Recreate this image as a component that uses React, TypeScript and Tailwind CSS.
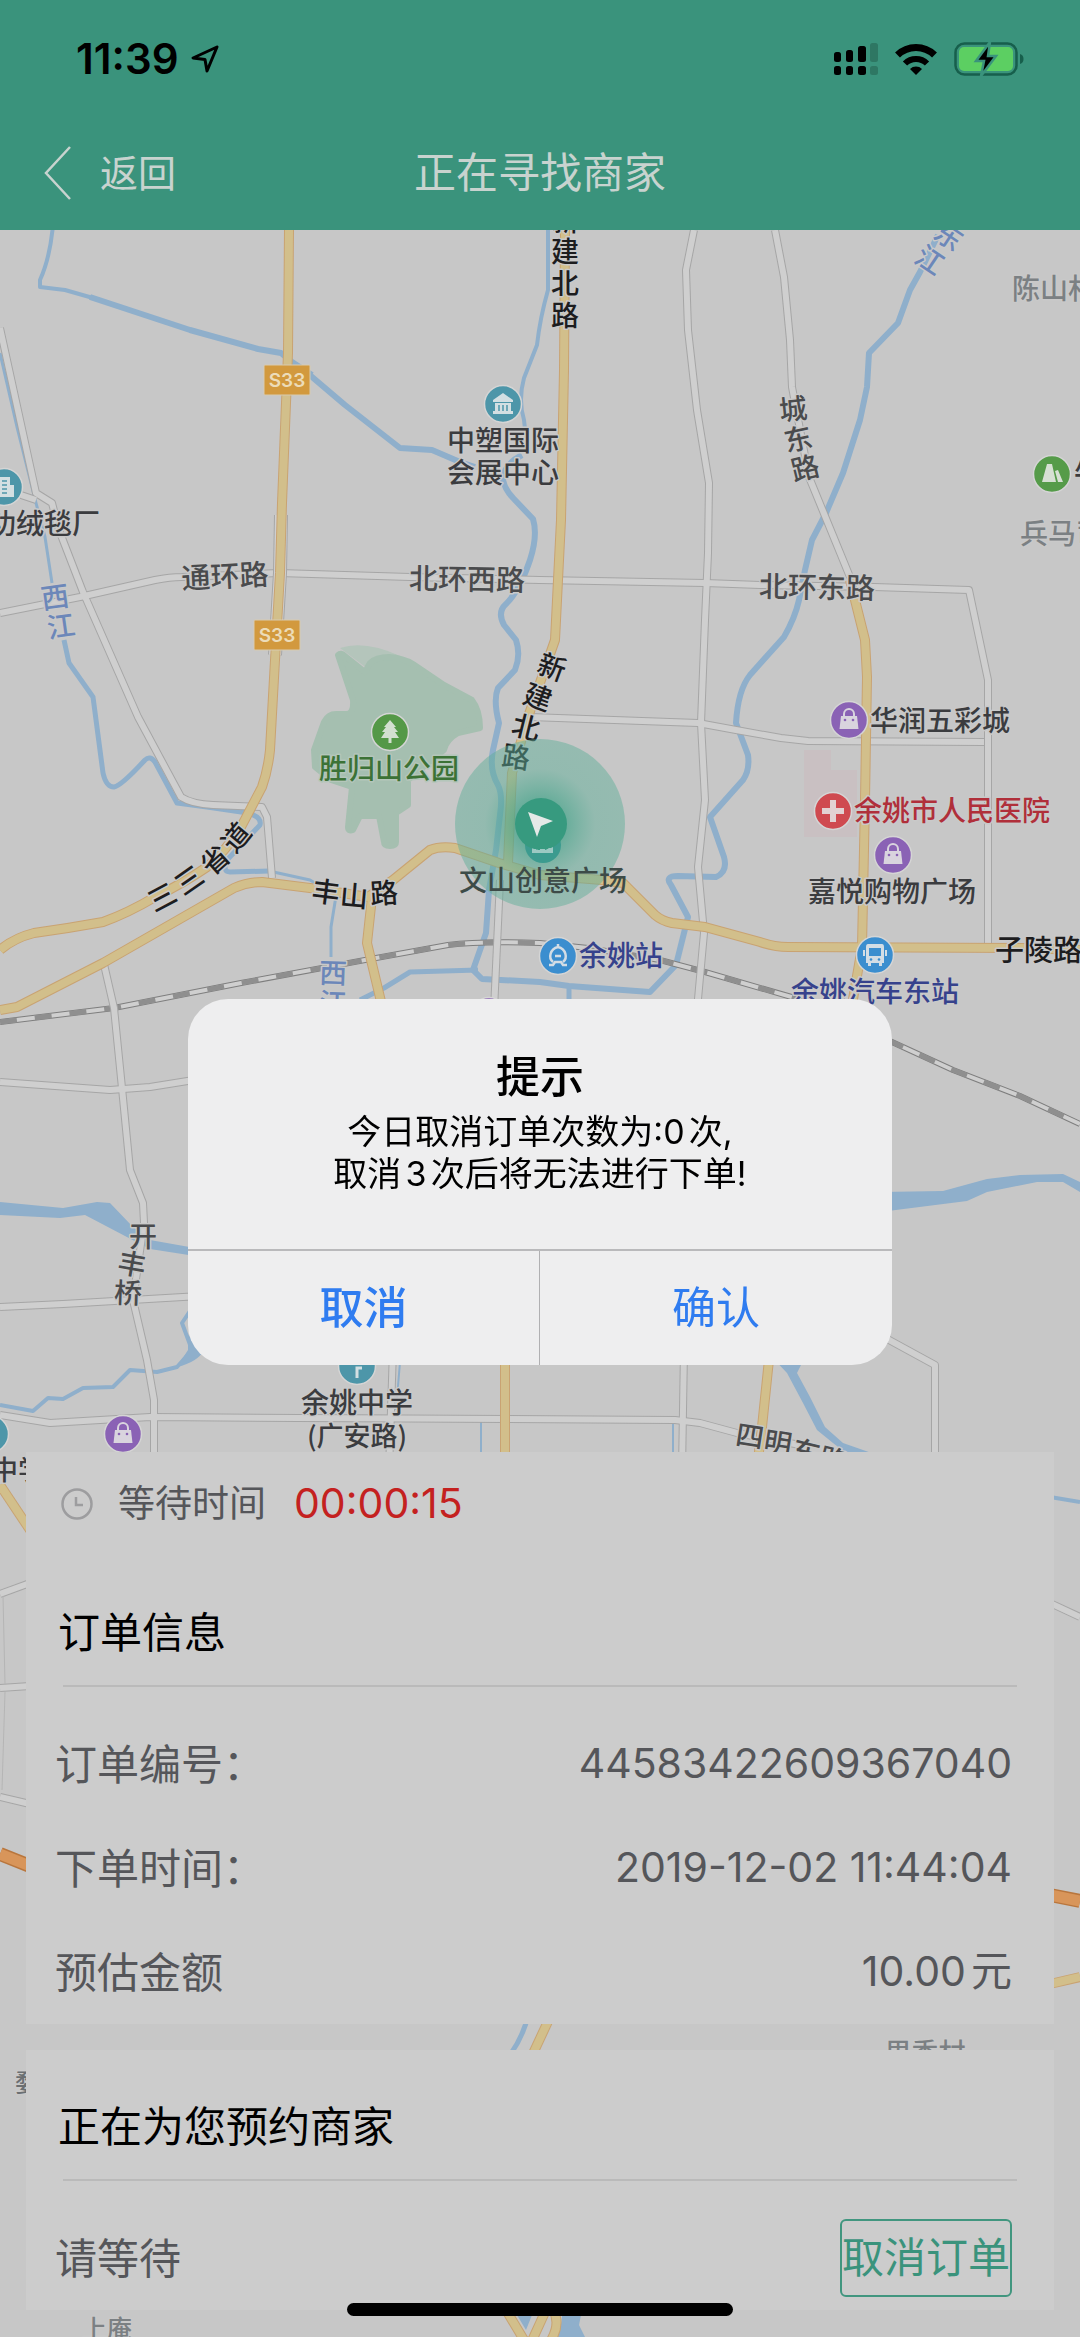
import type { ReactNode } from "react";

const WATER = "#8fafcb";
const INK = "#3b3c3f";
const ROAD_INK = "#4a4b4d";
const CJK = '"Noto Sans CJK SC", sans-serif';

const whiteRoads = [
  "M0 328L36 493L52 503L59 530L83 592L138 717L181 797Q192 804 213 805L262 807L267 817L272 878",
  "M21 495L36 500",
  "M0 613L80 597L155 580Q170 577 182 577L279 573L410 577L540 580L705 583L760 585L874 587L969 590L988 680V948",
  "M694 230L686 270L688 330L697 410L709 483L708 553L705 620L701 723L705 800L698 867L704 933L697 1010",
  "M775 230L784 277L790 340L792 387L809 477L850 577",
  "M530 717L698 723L736 730L781 738L808 741L984 742",
  "M500 880L494 1010",
  "M103 960L114 1008L122 1088L130 1170L143 1203L144 1223L133 1300L147 1360L154 1400V1460",
  "M0 1082L110 1090L150 1087L200 1079",
  "M0 1307L63 1304L200 1296",
  "M0 1415L50 1423L150 1417L300 1418L675 1420L700 1423L737 1433L800 1445",
  "M393 1350L389 1470",
  "M684 1350L682 1470",
  "M880 1335L935 1365V1460",
  "M0 1594L30 1583",
  "M0 1688L30 1686",
  "M0 1797L30 1804",
  "M1050 1603L1080 1617",
];

const yellowRoads = [
  "M289 230L288 353L282 503L280 573L275 660L270 750Q268 770 262 787L241 827Q225 852 207 867Q182 884 155 897Q128 913 103 922Q70 928 34 933Q14 938 0 950",
  "M0 1010L17 1007L103 963L234 888Q248 882 262 882L310 888L368 897L393 880L430 850Q440 846 455 848L499 863L540 875L602 880L623 883L655 915Q662 921 672 923L705 927L760 942Q775 947 788 947L1022 948L1080 950",
  "M372 897L367 943L383 1010",
  "M565 230L564 370L561 520L555 640L528 717L512 773L508 863",
  "M850 580L855 600L865 640L867 677L865 800L862 947L852 1005",
  "M770 1350L762 1427L758 1460",
  "M505 1350V1460",
  "M0 1485L30 1530",
  "M1050 1984L1080 1977",
  "M551 2015L530 2060",
  "M506 2310L527 2345M546 2310L530 2345M553 2310Q562 2325 548 2345",
];

const rivers: [string, number][] = [
  ["M53 225Q50 258 40 280V287L65 290L100 300", 4],
  ["M90 297L190 330L258 349L281 353L292 362L312 375", 6],
  ["M305 371L345 405L400 448L432 450L460 462L475 467", 6],
  ["M548 230V290Q540 318 537 345L524 378Q518 400 524 420L526 438", 4],
  ["M522 455Q503 465 503 480Q505 490 514 499L533 519Q538 535 530 560Q520 590 506 604Q497 612 504 625L516 640Q521 655 515 670L498 688Q493 700 499 723L493 750Q489 770 498 785Q503 795 500 815L496 850L489 890L486 933L473 970L482 979L540 982L569 986L650 992L676 965L688 917L671 885Q664 876 678 876L716 877Q728 872 724 857L710 817L743 780Q750 770 748 755L736 723Q738 690 750 675L784 637Q795 618 799 600L805 570L812 540L826 513L843 473L860 420L867 387L869 353L898 323L910 290L920 272L938 235", 6],
  ["M478 970L410 972L384 988L360 1000M569 985V1004", 5],
  ["M0 353L17 427L36 503L45 537L52 583", 3],
  ["M64 640L69 663L93 697L103 773Q106 787 114 787Q121 786 145 760Q150 755 155 762L177 803L207 807L248 813Q262 817 260 825L227 860Q222 872 230 872L269 871", 5],
  ["M269 871L310 880L336 896L331 927V957", 3],
  ["M0 1405L33 1411L48 1398L63 1399L83 1388L113 1387L130 1370L157 1372L177 1367L192 1350L182 1323L190 1311", 4],
  ["M401 1350L396 1410M481 1420V1460M673 1422V1460", 2],
  ["M1050 1497L1080 1502", 4],
  ["M528 2015Q524 2035 510 2055", 5],
];

const railway =
  "M0 1022L114 1008L241 983L365 960L448 945Q480 941 540 943L588 948L660 960L705 972L795 998L892 1042L953 1070L1020 1096L1080 1124";

type LabelProps = {
  x: number;
  y: number;
  children: string;
  size?: number;
  color?: string;
  turn?: number;
  anchor?: "start" | "middle" | "end";
  halo?: string;
};

function Label({ x, y, children, size = 27, color = INK, turn = 0, anchor = "middle", halo = "#c9c9c9" }: LabelProps) {
  return (
    <text
      x={x}
      y={y + size * 0.37}
      fontSize={size}
      fontWeight={500}
      fill={color}
      textAnchor={anchor}
      stroke={halo}
      strokeWidth={3}
      strokeLinejoin="round"
      paintOrder="stroke"
      transform={turn ? `rotate(${turn} ${x} ${y})` : undefined}
    >
      {children}
    </text>
  );
}

type Glyph = [char: string, x: number, y: number, turn: number];

function CurvedLabel({ glyphs, color = ROAD_INK }: { glyphs: Glyph[]; color?: string }) {
  return (
    <>
      {glyphs.map(([char, x, y, turn]) => (
        <Label key={`${x}-${y}`} x={x} y={y} turn={turn} size={28} color={color}>
          {char}
        </Label>
      ))}
    </>
  );
}

function Pin({ x, y, color, children }: { x: number; y: number; color: string; children?: ReactNode }) {
  return (
    <g transform={`translate(${x} ${y})`}>
      <circle r="18.500" fill={color} stroke="#d5d5d5" strokeWidth="1.500" />
      {children}
    </g>
  );
}

function Bag({ x, y }: { x: number; y: number }) {
  return (
    <Pin x={x} y={y} color="#8a62b5">
      <path d="M-8 -4H8L9.500 9H-9.500Z" fill="#d9d4de" />
      <path d="M-5 -3V-6A5 5 0 0 1 5 -6V-3" fill="none" stroke="#d9d4de" strokeWidth="2" />
      <circle cx="-4" cy="0" r="1.300" fill="#8a62b5" />
      <circle cx="4" cy="0" r="1.300" fill="#8a62b5" />
    </Pin>
  );
}

function RoadShield({ x, y }: { x: number; y: number }) {
  return (
    <g>
      <rect x={x} y={y} width="46" height="30" rx="1" fill="#d2993e" stroke="#d8cbb0" />
      <text x={x + 23} y={y + 22} textAnchor="middle" fontSize="19" fontWeight="600" fill="#ecdcb9" fontFamily="Inter, sans-serif">
        S33
      </text>
    </g>
  );
}

function CityMap() {
  return (
    <svg
      className="absolute inset-0 h-full w-full"
      viewBox="0 230 1080 2107"
      preserveAspectRatio="xMidYMin slice"
      fontFamily={CJK}
      role="img"
      aria-label="地图"
    >
      <defs>
        <radialGradient id="pulse">
          <stop offset="0" stopColor="#359b80" stopOpacity="0.950" />
          <stop offset="0.350" stopColor="#4aa68d" stopOpacity="0.700" />
          <stop offset="0.650" stopColor="#5fae98" stopOpacity="0.500" />
          <stop offset="1" stopColor="#5fae98" stopOpacity="0.480" />
        </radialGradient>
      </defs>
      <rect y="230" width="1080" height="2107" fill="#c7c7c7" />

      <path d="M340 648Q365 640 400 656L372 672Z" fill="#b4c5bb" />
      <path
        d="M338 655Q341 652 345 656L365 672L370 663Q376 657 389 657Q403 658 413 664L444 685L472 700Q480 710 480 728L458 733Q446 740 444 750L408 780V805L396 813V842Q396 846 390 846Q384 846 384 842L379 816H360L353 830Q348 832 348 827L352 787L331 780L315 767L314 750L324 722Q328 714 336 714H346Q354 714 353 700Z"
        fill="#a5bfb0"
        stroke="#a5bfb0"
        strokeWidth="6"
        strokeLinejoin="round"
      />
      <path d="M804 750H831V770H857V837H804Z" fill="#c9c0c2" />

      <g fill="none" stroke={WATER} strokeLinejoin="round">
        {rivers.map(([d, width]) => (
          <path key={d} d={d} strokeWidth={width} />
        ))}
      </g>
      <g fill={WATER}>
        <path d="M0 1202L63 1208L97 1202L110 1203L132 1226L150 1240L195 1248V1256L150 1249L125 1236L85 1215L60 1218L0 1215Z" />
        <path d="M880 1192L943 1191L987 1179L1020 1175L1063 1174L1080 1182V1192L1063 1182H1037L987 1192L967 1201L880 1212Z" />
        <path d="M770 1355H806L797 1373L810 1397L825 1427L843 1443L863 1450L880 1456H850L833 1443L817 1430L803 1403L787 1373Z" />
        <path d="M177 1367L188 1350V1335L204 1350Q198 1362 177 1367Z" />
        <path d="M562 2310H582L579 2325L585 2337H556Q563 2325 562 2310ZM514 2310H534L526 2330Z" />
      </g>

      <g fill="none" strokeLinejoin="round">
        <path d={railway} stroke="#7e7e7e" strokeWidth="6" />
        <path d={railway} stroke="#cfcfcf" strokeWidth="4" />
        <path d={railway} stroke="#8f8f8f" strokeWidth="5" strokeDasharray="17 18" />
        {whiteRoads.map((d) => (
          <path key={d} d={d} stroke="#a6a6a6" strokeWidth="8" />
        ))}
        {whiteRoads.map((d) => (
          <path key={d} d={d} stroke="#cfcfcf" strokeWidth="6" />
        ))}
        <path d="M281 515L280 573L275 655" stroke="#a6a6a6" strokeWidth="14" />
        <path d="M281 515L280 573L275 655" stroke="#cfcfcf" strokeWidth="12" />
        {yellowRoads.map((d) => (
          <path key={d} d={d} stroke="#c9a372" strokeWidth="10" />
        ))}
        {yellowRoads.map((d) => (
          <path key={d} d={d} stroke="#d2bf8b" strokeWidth="8" />
        ))}
        <path d="M0 1854L30 1866M1050 1895L1080 1901" stroke="#b9763d" strokeWidth="14" />
        <path d="M0 1854L30 1866M1050 1895L1080 1901" stroke="#d8955a" strokeWidth="11" />
        <path d="M3 1596L5 1684M5 1692L2 1790" stroke="#b5b5b5" strokeWidth="1" />
      </g>

      <RoadShield x={264} y={365} />
      <RoadShield x={254} y={620} />

      <Label x={225} y={576} size={29} turn={-3} color={ROAD_INK}>通环路</Label>
      <Label x={467} y={579} size={29} turn={1} color={ROAD_INK}>北环西路</Label>
      <Label x={817} y={587} size={29} turn={1} color={ROAD_INK}>北环东路</Label>
      <Label x={995} y={950} size={29} color="#1d1d1f" anchor="start">子陵路</Label>
      <CurvedLabel color="#1d1d1f" glyphs={[["新", 565, 221, 0], ["建", 565, 252, 0], ["北", 565, 284, 0], ["路", 565, 316, 0]]} />
      <CurvedLabel color="#1d1d1f" glyphs={[["新", 552, 667, 20], ["建", 538, 697, 20], ["北", 526, 727, 14], ["路", 516, 757, 8]]} />
      <CurvedLabel color="#1d1d1f" glyphs={[["三", 162, 897, -28], ["三", 189, 880, -35], ["省", 215, 860, -42], ["道", 236, 837, -50]]} />
      <CurvedLabel color="#1d1d1f" glyphs={[["丰", 326, 892, 7], ["山", 354, 896, 5], ["路", 384, 893, -4]]} />
      <CurvedLabel glyphs={[["城", 793, 409, -6], ["东", 798, 439, -12], ["路", 805, 468, -14]]} />
      <CurvedLabel glyphs={[["开", 143, 1237, 0], ["丰", 132, 1264, 10], ["桥", 128, 1293, 2]]} />
      <CurvedLabel glyphs={[["四", 750, 1436, 9], ["明", 778, 1443, 9], ["东", 806, 1452, 14], ["路", 833, 1460, 14]]} />
      <CurvedLabel color="#6c87b9" glyphs={[["西", 55, 597, -8], ["江", 61, 626, -8]]} />
      <CurvedLabel color="#6c87b9" glyphs={[["西", 333, 973, 2], ["江", 333, 1003, 2]]} />
      <CurvedLabel color="#6c87b9" glyphs={[["东", 949, 236, 34], ["江", 930, 260, 34]]} />

      <Label x={503} y={441} size={28}>中塑国际</Label>
      <Label x={503} y={473} size={28}>会展中心</Label>
      <Label x={100} y={524} size={28} anchor="end">功绒毯厂</Label>
      <Label x={1012} y={289} size={28} anchor="start" color="#7b8083">陈山村</Label>
      <Label x={1020} y={534} size={28} anchor="start" color="#7b8083">兵马司</Label>
      <Label x={1074} y={474} size={28} anchor="start">牛头山</Label>
      <Label x={389} y={769} size={28} color="#3c7236" halo="#b4c6ba">胜归山公园</Label>
      <Label x={870} y={721} size={28} anchor="start">华润五彩城</Label>
      <Label x={854} y={811} size={28} anchor="start" color="#b02f3a">余姚市人民医院</Label>
      <Label x={892} y={892} size={28}>嘉悦购物广场</Label>
      <Label x={579} y={956} size={28} anchor="start" color="#36428c">余姚站</Label>
      <Label x={875} y={992} size={28} color="#36428c">余姚汽车东站</Label>
      <Label x={357} y={1403} size={28}>余姚中学</Label>
      <Label x={357} y={1436}>(广安路)</Label>
      <Label x={-9} y={1470} anchor="start">中学</Label>
      <Label x={925} y={2053} color="#7b8083">里秀村</Label>
      <Label x={15} y={2083} size={25} anchor="start" color="#6b6f72">婺江</Label>
      <Label x={107} y={2329} size={25} color="#7b8083">上庵</Label>

      <Pin x={503} y={404} color="#4d96a9">
        <path d="M-10 -4L0 -11L10 -4V-2H-10ZM-8 -1H8V7H10V10H-10V7H-8Z" fill="#d3dfe2" />
        <path d="M-4 1V7M0 1V7M4 1V7" stroke="#4d96a9" strokeWidth="1.500" />
      </Pin>
      <Pin x={4} y={487} color="#4d96a9">
        <path d="M-6 -10H6V-2H10V10H-6Z" fill="#d3dfe2" />
        <path d="M-2 -6H3M-2 -2H3M-2 2H3M-2 6H3" stroke="#4d96a9" strokeWidth="1.500" />
      </Pin>
      <Pin x={1052} y={474} color="#559b49">
        <path d="M-10 8L-5 -10H0L4 8ZM6 8L3 -3L6 -4L11 8Z" fill="#d6e0d3" />
      </Pin>
      <Pin x={390} y={732} color="#549847">
        <path d="M0 -12L6 -5H4L8 0H5L9 6H1.500V11H-1.500V6H-9L-5 0H-8L-4 -5H-6Z" fill="#d3dfd0" />
      </Pin>
      <Bag x={849} y={720} />
      <Bag x={893} y={855} />
      <Bag x={123} y={1434} />
      <Bag x={489} y={1016} />
      <Pin x={833} y={811} color="#cf4a50">
        <path d="M0 -11V11M-11 0H11" stroke="#e2d2d3" strokeWidth="6" />
      </Pin>
      <Pin x={558} y={956} color="#3b8ecf">
        <path d="M-5 6C-10 2 -8 -7 0 -9C8 -7 10 2 5 6M0 -12V-8M-9 9H-5L-3 6H3L5 9H9M-3 0H3" fill="none" stroke="#d3dde5" strokeWidth="2.500" />
      </Pin>
      <Pin x={875} y={955} color="#3b8ecf">
        <path d="M-7 -11H7Q9 -11 9 -8V8H7V11H4V8H-4V11H-7V8H-9V-8Q-9 -11 -7 -11Z" fill="#d3dde5" />
        <path d="M-11 -5V1M11 -5V1" stroke="#d3dde5" strokeWidth="2" />
        <rect x="-6" y="-7" width="12" height="8" fill="#3b8ecf" />
        <circle cx="-4" cy="4.500" r="1.300" fill="#3b8ecf" />
        <circle cx="4" cy="4.500" r="1.300" fill="#3b8ecf" />
      </Pin>
      <Pin x={357} y={1366} color="#4d96a9">
        <path d="M0 12V2H5" fill="none" stroke="#d3dfe2" strokeWidth="3" />
      </Pin>
      <Pin x={-10} y={1434} color="#4d96a9" />

      <circle cx="540" cy="824" r="85" fill="url(#pulse)" />
      <Label x={543} y={881} size={28} color="#3d4b48" halo="none">文山创意广场</Label>
      <circle cx="543" cy="845" r="18" fill="#3c9b8f" />
      <path d="M532 853V847H535V850L538 848V850H541V848L545 850L549 848V846L553 845V853Z" fill="#9cc9c3" />
      <circle cx="541" cy="824" r="26" fill="#379a7f" />
      <path d="M532 853V849H536V851H540V849H545V851L549 848H553V853Z" fill="#9cc9c3" />
      <path d="M528 812L553 821L541 826L537 837Z" fill="#e4e9e7" />
    </svg>
  );
}

function StatusIcons() {
  return (
    <div className="flex items-center gap-[17px]">
      <svg width="44" height="32" viewBox="0 0 44 32" aria-label="信号">
        <rect x="0" y="9" width="7" height="10" rx="2.500" />
        <rect x="12" y="7" width="7" height="12" rx="2.500" />
        <rect x="24" y="3" width="8" height="16" rx="2.500" />
        <rect x="36" y="0" width="8" height="19" rx="2.500" fill="#2e7763" />
        <rect x="0" y="23" width="7" height="9" rx="2.500" />
        <rect x="12" y="23" width="7" height="9" rx="2.500" />
        <rect x="24" y="23" width="8" height="9" rx="2.500" />
        <rect x="36" y="23" width="8" height="9" rx="2.500" fill="#2e7763" />
      </svg>
      <svg width="42" height="32" viewBox="0 0 42 32" fill="none" stroke="#000" strokeWidth="7" aria-label="无线网络">
        <path d="M2.500 12A26.500 26.500 0 0 1 39.500 12" />
        <path d="M10 20.500A15.500 15.500 0 0 1 32 20.500" strokeWidth="6" />
        <path d="M21 32L15 26A8.500 8.500 0 0 1 27 26Z" fill="#000" stroke="none" />
      </svg>
      <svg width="70" height="34" viewBox="0 0 70 34" aria-label="正在充电">
        <rect x="1.500" y="1.500" width="61" height="31" rx="9" fill="none" stroke="#175f4c" strokeWidth="2.500" />
        <rect x="5" y="5" width="54" height="24" rx="5" fill="#5ccf62" />
        <path d="M66 12Q69.500 13 69.500 17T66 22Z" fill="#175f4c" />
        <path d="M36 0L22 19H30L27 34L42 14H34Z" fill="#000" stroke="#3a937c" strokeWidth="2.500" />
      </svg>
    </div>
  );
}

function Header() {
  return (
    <header className="relative bg-[#3a937c]">
      <div className="flex h-[118px] items-center justify-between pr-[56px] pl-[76px]">
        <div className="flex items-center gap-3">
          <span className="text-[42px] leading-none font-semibold text-black">11:39</span>
          <svg width="28" height="28" viewBox="0 0 28 28" fill="none" stroke="#000" strokeWidth="3" strokeLinejoin="round" aria-hidden="true">
            <path d="M26 2L2 13L14 14.500L16 26Z" />
          </svg>
        </div>
        <StatusIcons />
      </div>
      <div className="grid h-[110px] grid-cols-[1fr_auto_1fr] items-center px-[44px] text-[#c8d3cf]">
        <button type="button" className="flex items-center gap-[28px] justify-self-start text-[38px] leading-none">
          <svg width="28" height="54" viewBox="0 0 28 54" fill="none" stroke="currentColor" strokeWidth="2.500" aria-hidden="true">
            <path d="M26 1L2 27L26 53" />
          </svg>
          返回
        </button>
        <h1 className="text-[42px] leading-none">正在寻找商家</h1>
      </div>
      <div className="h-0.5" />
    </header>
  );
}

function SectionTitle({ children }: { children: string }) {
  return (
    <>
      <h2 className="mt-6 flex h-[104px] items-center px-8 text-[42px] text-black">{children}</h2>
      <hr className="mx-[37px] mt-px border-t-2 border-[#bababa]" />
    </>
  );
}

const orderRows = [
  { label: "订单编号：", value: "44583422609367040" },
  { label: "下单时间：", value: "2019-12-02 11:44:04" },
  { label: "预估金额", value: "10.00元" },
];

function OrderCards() {
  return (
    <div className="relative flex flex-1 flex-col justify-end gap-[26px] px-[26px] pb-[27px] text-[#55565a]">
      <section className="bg-[#cccccc]">
        <div className="flex h-[104px] items-center pl-[35px]">
          <svg width="32" height="32" viewBox="0 0 32 32" fill="none" stroke="#9d9d9f" strokeWidth="2.500" aria-hidden="true">
            <circle cx="16" cy="16" r="14.500" />
            <path d="M15 9V17H22" />
          </svg>
          <span className="ml-[25px] text-[37px]">等待时间</span>
          <time className="ml-[28px] text-[41px] text-[#c4211f]">00:00:15</time>
        </div>
        <SectionTitle>订单信息</SectionTitle>
        <dl className="mt-[25px]">
          {orderRows.map((row) => (
            <div key={row.label} className="flex h-[104px] items-center justify-between pr-[42px] pl-[29px]">
              <dt className="text-[42px]">{row.label}</dt>
              <dd className="text-[41px] [text-autospace:normal]">{row.value}</dd>
            </div>
          ))}
        </dl>
      </section>
      <section className="bg-[#cccccc]">
        <SectionTitle>正在为您预约商家</SectionTitle>
        <div className="mt-[25px] flex h-[104px] items-center justify-between pr-[42px] pl-[29px]">
          <p className="text-[42px]">请等待</p>
          <button type="button" className="h-[78px] rounded-md border-2 border-[#41967f] text-[42px] leading-none text-[#3a937c]">
            取消订单
          </button>
        </div>
      </section>
    </div>
  );
}

function CancelDialog() {
  return (
    <div className="fixed inset-0 flex items-center justify-center px-8 pt-[26px]">
      <div
        role="alertdialog"
        aria-modal="true"
        aria-labelledby="dialog-title"
        aria-describedby="dialog-text"
        className="w-full max-w-[704px] overflow-hidden rounded-[40px] bg-[#eeeeef] text-center text-black"
      >
        <div className="px-8 pt-12 pb-[54px]">
          <h2 id="dialog-title" className="text-[44px] leading-[60px] font-medium">
            提示
          </h2>
          <p id="dialog-text" className="mt-1 text-[34px] leading-[42px] [text-autospace:normal]">
            今日取消订单次数为:0次,
            <br />
            取消3次后将无法进行下单!
          </p>
        </div>
        <div className="grid grid-cols-2 border-t-2 border-[#b9b9bb] text-[44px] text-[#2f7cf0]">
          <button type="button" className="h-[114px] border-r border-[#b0b0b2] font-medium">
            取消
          </button>
          <button type="button" className="h-[114px]">
            确认
          </button>
        </div>
      </div>
    </div>
  );
}

export default function App() {
  return (
    <div className="flex min-h-screen flex-col bg-[#c7c7c7] font-[Inter,'Noto_Sans_CJK_SC',sans-serif]">
      <Header />
      <main className="relative flex flex-1 flex-col overflow-hidden">
        <CityMap />
        <OrderCards />
      </main>
      <CancelDialog />
      <div className="fixed inset-x-0 bottom-[21px] mx-auto h-[13px] w-[386px] rounded-full bg-black" />
    </div>
  );
}
